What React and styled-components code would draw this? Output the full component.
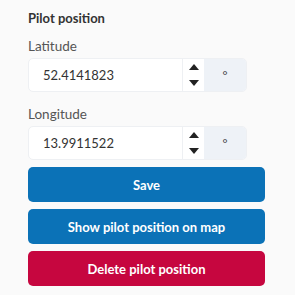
import React, { useState } from 'react';
import styled, { createGlobalStyle } from 'styled-components';

const GlobalStyle = createGlobalStyle`
  html, body {
    margin: 0;
    padding: 0;
    background: #fafafa;
  }
  body {
    font-family: Lato, "Noto Sans", sans-serif;
  }
`;

function NumberField({ label, value, onChange, unit }) {
  const step = (d) => onChange((parseFloat(value) + d * 0.0000001).toFixed(7));

  return (
    <Field>
      <Label>{label}</Label>
      <InputGroup>
        <Input value={value} onChange={(e) => onChange(e.target.value)} />
        <Spinner>
          <Arrow onClick={() => step(1)}>
            <svg width="10" height="6" viewBox="0 0 10 6"><path d="M0 6 L5 0 L10 6 Z" fill="#222" /></svg>
          </Arrow>
          <Arrow onClick={() => step(-1)}>
            <svg width="10" height="6" viewBox="0 0 10 6"><path d="M0 0 L5 6 L10 0 Z" fill="#222" /></svg>
          </Arrow>
        </Spinner>
        <Unit>{unit}</Unit>
      </InputGroup>
    </Field>
  );
}

function App() {
  const [lat, setLat] = useState('52.4141823');
  const [lng, setLng] = useState('13.9911522');

  return (
    <Panel>
      <GlobalStyle />
      <Title>Pilot position</Title>
      <Fields>
        <NumberField label="Latitude" value={lat} onChange={setLat} unit="°" />
        <NumberField label="Longitude" value={lng} onChange={setLng} unit="°" />
      </Fields>
      <Buttons>
        <Button>Save</Button>
        <Button>Show pilot position on map</Button>
        <Button variant="danger">Delete pilot position</Button>
      </Buttons>
    </Panel>
  );
}

export default App;

const Panel = styled.div`
  width: 237px;
  padding: 10px 30px 0 28px;
  display: flex;
  flex-direction: column;
`;

const Title = styled.h3`
  margin: 0 0 11px;
  font-size: 13px;
  font-weight: 700;
  line-height: 17px;
  color: #333;
`;

const Fields = styled.div`
  display: flex;
  flex-direction: column;
  gap: 14px;
`;

const Field = styled.div`
  display: flex;
  flex-direction: column;
`;

const Label = styled.label`
  font-size: 13.5px;
  line-height: 17px;
  color: #555;
  margin-bottom: 3px;
`;

const InputGroup = styled.div`
  display: flex;
  width: 219px;
  height: 34px;
  box-sizing: border-box;
  border: 1px solid #eef0f3;
  border-radius: 5px;
  background: #fff;
  overflow: hidden;
`;

const Input = styled.input`
  flex: 1;
  min-width: 0;
  border: none;
  outline: none;
  padding: 0 0 0 14px;
  font-family: inherit;
  font-size: 13px;
  color: #333;
  background: transparent;
`;

const Spinner = styled.div`
  width: 21px;
  display: flex;
  flex-direction: column;
  border-left: 1px solid #eef0f3;
`;

const Arrow = styled.button`
  flex: 1;
  border: none;
  background: transparent;
  padding: 0;
  display: flex;
  align-items: center;
  justify-content: center;
  cursor: pointer;
`;

const Unit = styled.span`
  width: 42px;
  display: flex;
  align-items: center;
  justify-content: center;
  background: #eef2f7;
  color: #444;
  font-size: 12px;
`;

const Buttons = styled.div`
  display: flex;
  flex-direction: column;
  gap: 7px;
  margin-top: 7px;
`;

const Button = styled.button`
  height: 35px;
  border: none;
  border-radius: 5px;
  background: ${(p) => (p.variant === 'danger' ? '#c6063f' : '#0b72b7')};
  color: #fff;
  font-family: inherit;
  font-size: 13px;
  font-weight: 700;
  cursor: pointer;
`;
